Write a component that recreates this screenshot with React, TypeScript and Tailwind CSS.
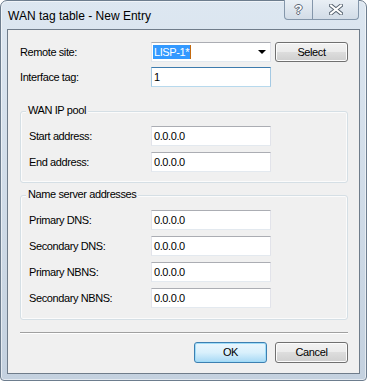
import React from "react";

function TextBox({ value, hover }: { value: string; hover?: boolean }) {
    return (
        <div
            className={
                hover
                    ? "w-[120px] h-[20px] bg-white border border-[#a4c9e3] border-t-[#3d7bad] border-b-[#b7d9ed] pl-[2px] flex items-center"
                    : "w-[120px] h-[20px] bg-white border border-[#e2e3ea] border-t-[#abadb3] border-b-[#e3e9ef] pl-[2px] flex items-center"
            }
        >
            <span className="leading-[13px]">{value}</span>
        </div>
    );
}

function Button({ label, primary, h = "h-[21px]" }: { label: string; primary?: boolean; h?: string }) {
    return (
        <div
            className={
                primary
                    ? `w-[73px] ${h} rounded-[3px] border border-[#3c7fb1] bg-gradient-to-b from-[#eaf6fd] via-[#d9f0fc] to-[#a7d9f5] shadow-[inset_0_0_0_1px_#9fdcf8] flex items-center justify-center`
                    : `w-[73px] ${h} rounded-[3px] border border-[#707070] bg-[linear-gradient(#f2f2f2_0%,#ebebeb_49%,#dddddd_50%,#cfcfcf_100%)] shadow-[inset_0_0_0_1px_#fcfcfc] flex items-center justify-center`
            }
        >
            <span className="leading-[13px]">{label}</span>
        </div>
    );
}

function Row({ label, value, labelW, hover }: { label: string; value: string; labelW: string; hover?: boolean }) {
    return (
        <div className="flex items-center h-[20px]">
            <span className={`${labelW} leading-[13px]`}>{label}</span>
            <TextBox value={value} hover={hover} />
        </div>
    );
}

function Group({ title, children }: { title: string; children: React.ReactNode }) {
    return (
        <div className="relative rounded-[3px] border border-[#d5dfe5] shadow-[inset_0_0_0_1px_#fbfbfb] pt-[14px] pl-[8px] flex flex-col gap-[6px]">
            <span className="absolute left-[5px] -top-[8px] px-[2px] bg-[#f0f0f0] leading-[13px]">{title}</span>
            {children}
        </div>
    );
}

export default function App() {
    return (
        <div className="w-[367px] h-[381px] font-['Liberation_Sans',Arial,sans-serif] text-[11px] tracking-[-0.4px] text-black">
            <div className="h-full w-full flex flex-col rounded-t-[7px] rounded-b-[4px] border border-[#6d7d8e] bg-gradient-to-b from-[#dde7f1] to-[#c4d1df] shadow-[inset_0_0_0_1px_rgba(255,255,255,0.55)] px-[6px] pb-[6px]">
                {/* title bar */}
                <div className="h-[28px] flex items-start justify-between">
                    <span className="mt-[8px] ml-[1px] text-[12px] leading-[14px] tracking-normal">WAN tag table - New Entry</span>
                    <div className="flex mr-[1px] -mt-[1px]">
                        <div className="w-[29px] h-[20px] rounded-bl-[4px] border border-t-0 border-[#8496aa] bg-gradient-to-b from-[#e9eff5] to-[#d2dce7] flex items-center justify-center">
                            <span className="text-[13px] font-bold leading-[13px] text-white tracking-normal [text-shadow:1px_0_#5a6675,-1px_0_#5a6675,0_1px_#5a6675,0_-1px_#5a6675]">?</span>
                        </div>
                        <div className="w-[46px] h-[20px] rounded-br-[4px] border border-l-0 border-t-0 border-[#8496aa] bg-gradient-to-b from-[#e9eff5] to-[#d2dce7] flex items-center justify-center">
                            <svg width="14" height="11" viewBox="0 0 14 11">
                                <path d="M2 1.5 L12 9.5 M12 1.5 L2 9.5" stroke="#56626f" strokeWidth="4" strokeLinecap="square" />
                                <path d="M2 1.5 L12 9.5 M12 1.5 L2 9.5" stroke="#ffffff" strokeWidth="2" strokeLinecap="square" />
                            </svg>
                        </div>
                    </div>
                </div>

                {/* client area */}
                <div className="flex-1 border border-[#6f7c8a] bg-[#f0f0f0] pl-[12px] pr-[11px] pt-[12px] flex flex-col">
                    <div className="flex items-center h-[20px]">
                        <span className="w-[131px] leading-[13px]">Remote site:</span>
                        <div className="relative w-[120px] h-[20px] bg-white border border-[#e2e3ea] border-t-[#abadb3] border-b-[#e3e9ef] pl-[1px] flex items-center">
                            <span className="bg-[#3399ff] text-white leading-[14px] pl-[1px] pr-[1px]">LISP-1*</span>
                            <span className="w-[1px] h-[14px] bg-[#c46a10]" />
                            <svg className="absolute right-[4px] top-[7px]" width="8" height="4" viewBox="0 0 8 4">
                                <path d="M0 0 L8 0 L4 4 Z" fill="#000" />
                            </svg>
                        </div>
                        <div className="ml-[4px]">
                            <Button label="Select" h="h-[20px]" />
                        </div>
                    </div>
                    <div className="mt-[5px]">
                        <Row label="Interface tag:" value="1" labelW="w-[131px]" hover />
                    </div>

                    <div className="mt-[24px]">
                        <Group title="WAN IP pool">
                            <Row label="Start address:" value="0.0.0.0" labelW="w-[122px]" />
                            <Row label="End address:" value="0.0.0.0" labelW="w-[122px]" />
                            <div className="h-[4px]" />
                        </Group>
                    </div>

                    <div className="mt-[12px]">
                        <Group title="Name server addresses">
                            <Row label="Primary DNS:" value="0.0.0.0" labelW="w-[122px]" />
                            <Row label="Secondary DNS:" value="0.0.0.0" labelW="w-[122px]" />
                            <Row label="Primary NBNS:" value="0.0.0.0" labelW="w-[122px]" />
                            <Row label="Secondary NBNS:" value="0.0.0.0" labelW="w-[122px]" />
                            <div className="h-[5px]" />
                        </Group>
                    </div>

                    <div className="mt-[12px] h-[2px] border-t border-[#a0a0a0] border-b border-b-white" />

                    <div className="mt-[8px] flex justify-end gap-[8px]">
                        <Button label="OK" primary />
                        <Button label="Cancel" />
                    </div>
                </div>
            </div>
        </div>
    );
}
